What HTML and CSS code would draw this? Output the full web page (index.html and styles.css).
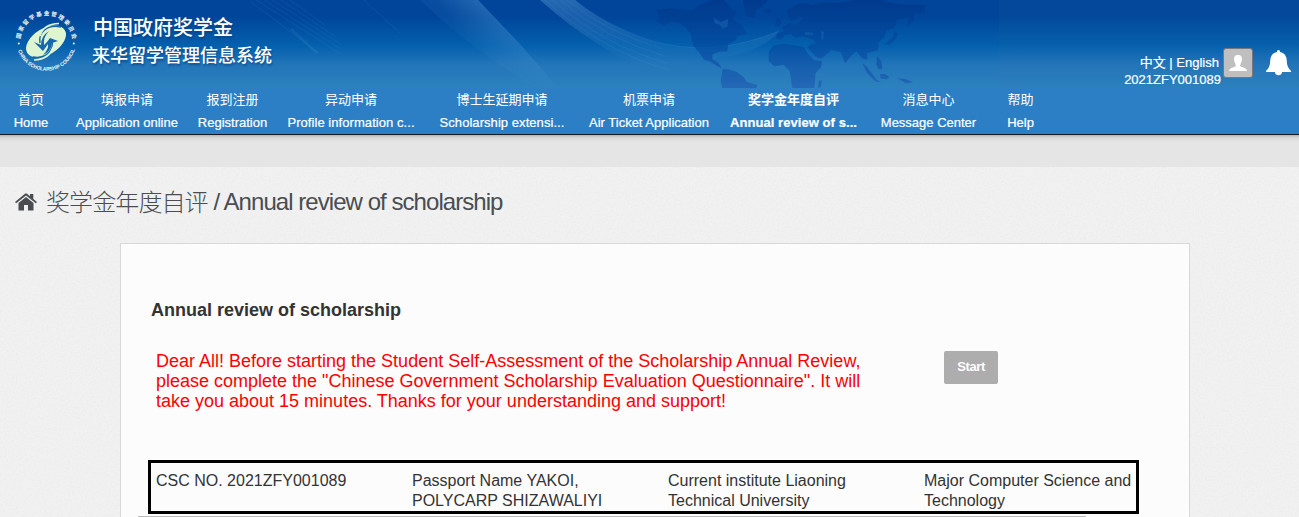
FILE: index.html
```html
<!DOCTYPE html>
<html lang="zh">
<head>
<meta charset="utf-8">
<title>Annual review of scholarship</title>
<link rel="stylesheet" href="styles.css">
</head>
<body>
<header class="header">
  <svg class="header-art" viewBox="0 0 1299 88" aria-hidden="true">
    <defs>
      <linearGradient id="beam" x1="430" y1="80" x2="500" y2="20" gradientUnits="userSpaceOnUse"><stop offset="0" stop-color="#559fd8" stop-opacity="0"/><stop offset=".6" stop-color="#559fd8" stop-opacity=".1"/><stop offset="1" stop-color="#5aa2dc" stop-opacity=".4"/></linearGradient>
      <linearGradient id="fade" x1="0" x2="0" y1="0" y2="88" gradientUnits="userSpaceOnUse"><stop offset="0" stop-color="#fff"/><stop offset=".5" stop-color="#bbb"/><stop offset="1" stop-color="#222"/></linearGradient>
      <mask id="beam-mask"><rect width="1299" height="88" fill="url(#fade)"/></mask>
      <linearGradient id="sweep" x1="0" x2="0" y1="0" y2="1"><stop offset="0" stop-color="#65a8dd" stop-opacity=".36"/><stop offset="1" stop-color="#559fd8" stop-opacity="0"/></linearGradient>
      <linearGradient id="land" x1="0" x2="0" y1="0" y2="264" gradientUnits="userSpaceOnUse"><stop offset="0" stop-color="#003789" stop-opacity=".75"/><stop offset=".55" stop-color="#044ba1" stop-opacity=".7"/><stop offset="1" stop-color="#2362b5" stop-opacity=".8"/></linearGradient>
    </defs>
    <rect x="999" width="300" height="88" fill="#2d6eb0" opacity=".08"/>
    <path fill="url(#beam)" mask="url(#beam-mask)" d="M420 0H478L520 44L558 88H535Q467 46 420 0Z"/>
    <path fill="url(#sweep)" d="M540 0H575Q602 23 646 39Q710 59 779 31Q760 55 700 61Q650 80 600 45Q570 27 540 0Z"/>
    <g fill="none" stroke="#72b2e2" stroke-opacity=".1">
      <path d="M575 0Q602 23 646 39Q710 60 779 31M567 0Q605 32 663 49M560 0Q605 39 665 56M552 0Q605 46 667 63M544 0Q605 52 669 70"/>
      <path d="M256 0L341 54M264 0L341 49M272 0L341 44M281 0L336 37M250 1L320 54M290 0L325 25"/>
      <path stroke-width="3" d="M291 29L317 53"/>
      <path d="M364 0L400 33"/>
    </g>
    <g class="world" transform="translate(620) scale(.33333)">
      <path d="M110 29L150 25L215 32L240 15L275 0H312L330 22L350 40L335 57L365 75L380 102L353 107L348 120L325 132L322 154L297 155L277 164L277 178L296 189L306 205L292 199L270 184L252 179L236 155L219 137L212 101L196 82L175 67L151 65L132 77L110 62L119 54Z"/>
      <path d="M369 0H443L429 18L407 32L404 54L379 47L373 23Z"/>
      <path d="M308 206L329 209L350 216L368 228L381 246L412 255L409 264H307L302 242Z"/>
      <path d="M458 137L490 131L515 134L551 141L565 163L582 179L606 184L603 202L587 219L583 264H517L509 212L491 195L463 199L446 184V157Z"/>
      <path d="M505 49L499 34L523 17L547 8L579 15L610 7L654 9L705 0H784L835 13L914 14L915 37L883 42L881 63L863 77L866 53L831 60L824 83L799 93L792 113L777 126L773 151L741 160L742 180L726 175L709 154L694 167L675 190L662 156L634 150L618 165L602 177L585 169L562 141L588 126L565 113L543 109L529 113L512 103L493 105L484 120L469 115L471 101L493 91L482 83L510 69L526 74L550 55L541 49L514 65Z"/>
      <path d="M824 94L833 101L828 117L808 134L793 133L817 114ZM726 188L741 201L770 239L783 247L766 244L741 219ZM780 223L793 221L808 230L801 238L782 236ZM771 169L784 184L787 207L776 208L769 195ZM831 234L858 238L880 247L858 250ZM597 242L606 241L602 262L593 263ZM431 28L454 27L448 39L435 37ZM472 53L483 60L480 78L463 78Z"/>
      <path class="water" d="M282 54L301 66L325 57L323 80L307 87L300 75L284 70ZM555 96L580 98L580 106L555 105ZM602 92L612 96L610 120L604 117ZM560 144L578 170L583 174L570 160Z"/>
    </g>
  </svg>
  <div class="brand">
    <svg class="logo" viewBox="0 0 64 66" role="img" aria-label="CSC">
      <defs><path id="arc-top" d="M6.4 30A26 26 0 0 1 58.2 30"/><path id="arc-bottom" d="M3.6 40A29.8 29.8 0 0 0 61 40"/></defs>
      <text class="seal-cn"><textPath href="#arc-top" startOffset="0" textLength="77">国家留学基金管理委员会</textPath></text>
      <text class="seal-en"><textPath href="#arc-bottom" startOffset="1.5" textLength="75" lengthAdjust="spacingAndGlyphs">CHINA SCHOLARSHIP COUNCIL</textPath></text>
      <circle cx="4.8" cy="34.5" r="1" fill="#eef6e6"/><circle cx="59.8" cy="34.5" r="1" fill="#eef6e6"/>
      <ellipse cx="32" cy="32.5" rx="22" ry="13" transform="rotate(-31 32 32.5)" fill="#dff5cf"/>
      <g fill="none" stroke="#1668ac" stroke-width="1.4">
        <path d="M26 34C24 23 34 15 47 18M38 31C40 42 32 50 19 48"/>
      </g>
      <path d="M20 33L27 36Q27 27 35 22Q29 28 30 36L33 33L36 29L44 32L38 34Q37 43 29 46Q35 40 34 35L29 42Z" fill="#1668ac"/>
      <path d="M26 27Q29 15 45 14.5M39 38Q36 50 20 51" stroke="#dff5cf" stroke-width="1.7" fill="none"/>
    </svg>
    <div class="brand-name"><div class="brand-top">中国政府奖学金</div><div class="brand-sub">来华留学管理信息系统</div></div>
  </div>
  <div class="account">
    <div class="account-text"><div class="languages">中文 | English</div><div class="user-id">2021ZFY001089</div></div>
    <div class="avatar"><svg width="18" height="17" viewBox="0 0 18 17"><path fill="#fff" d="M9 0C5.8 0 4.7 2 5.2 5.2C4.8 6 5.5 7 6 7.5C6.4 9.5 7 10 6.8 11C6 12.3 0 12.8 0 16H18C18 12.8 12 12.3 11.2 11C11 10 11.6 9.5 12 7.5C12.5 7 13.2 6 12.8 5.2C13.3 2 12.2 0 9 0Z"/></svg></div>
    <svg class="bell" width="25" height="27" viewBox="0 0 25 27"><path fill="#fff" d="M12.5 0Q14.1 0 14.1 2Q20.5 3.2 20.8 11Q20.8 17 25 21V22H16.2A3.8 4.3 0 0 1 8.8 22H0V21Q4.2 17 4.2 11Q4.5 3.2 10.9 2Q10.9 0 12.5 0Z"/></svg>
  </div>
</header>
<nav class="nav">
  <a class="nav-item"><span>首页</span><span class="en">Home</span></a>
  <a class="nav-item"><span>填报申请</span><span class="en">Application online</span></a>
  <a class="nav-item"><span>报到注册</span><span class="en">Registration</span></a>
  <a class="nav-item"><span>异动申请</span><span class="en dots">Profile information c...</span></a>
  <a class="nav-item"><span>博士生延期申请</span><span class="en dots">Scholarship extensi...</span></a>
  <a class="nav-item"><span>机票申请</span><span class="en">Air Ticket Application</span></a>
  <a class="nav-item active"><span>奖学金年度自评</span><span class="en dots">Annual review of s...</span></a>
  <a class="nav-item"><span>消息中心</span><span class="en">Message Center</span></a>
  <a class="nav-item"><span>帮助</span><span class="en">Help</span></a>
</nav>
<div class="substrip"></div>
<main class="content">
  <svg class="grain" aria-hidden="true"><filter id="noise"><feTurbulence type="fractalNoise" baseFrequency=".55" numOctaves="2"/><feColorMatrix values="0 0 0 0 .5  0 0 0 0 .5  0 0 0 0 .5  .2 0 0 0 -.08"/></filter><rect width="100%" height="100%" filter="url(#noise)"/></svg>
  <div class="page-title">
    <svg class="home" width="22" height="18" viewBox="0 0 22 18"><path fill="#494d51" d="M0 9L10 .7Q11 0 12 .7L15 3.2V1H18.3V6L22 9L20.8 10.3L11 2.6L1.2 10.3ZM3.5 10L11 4L18.5 10V17.5H13V12H9V17.5H3.5Z"/></svg>
    <h1><span class="title-cn">奖学金年度自评</span><span class="title-en"> / Annual review of scholarship</span></h1>
  </div>
  <section class="panel">
    <h2>Annual review of scholarship</h2>
    <div class="notice-row">
      <p class="notice">Dear All! Before starting the Student Self-Assessment of the Scholarship Annual Review,<br>please complete the "Chinese Government Scholarship Evaluation Questionnaire". It will<br>take you about 15 minutes. Thanks for your understanding and support!</p>
      <button class="start">Start</button>
    </div>
    <div class="details">
      <div>CSC NO. 2021ZFY001089</div>
      <div>Passport Name YAKOI,<br>POLYCARP SHIZAWALIYI</div>
      <div>Current institute Liaoning<br>Technical University</div>
      <div>Major Computer Science and<br>Technology</div>
    </div>
    <div class="rule"></div>
  </section>
</main>
</body>
</html>
```
FILE: styles.css
```css
* { box-sizing: border-box; }
body { margin: 0; height: 517px; overflow: hidden; background: #f1f1f1; color: #333; font-family: "Liberation Sans", "Noto Sans CJK SC", sans-serif; }
.header { position: relative; height: 88px; display: flex; justify-content: space-between; background: linear-gradient(#00459a 0, #00459a 18%, #0460ad 52%, #2275b9 73%, #2c82bd 100%); color: #fff; }
.header-art { position: absolute; inset: 0; width: 100%; height: 88px; }
.world { fill: url(#land); filter: blur(.4px); }
.world .water { fill: #145da9; opacity: .7; }
.brand { position: relative; display: flex; padding: 9px 0 0 14px; }
.logo { width: 64px; height: 66px; flex: none; }
.logo text { fill: #eef6f5; }
.seal-cn { font: 700 5.6px "Noto Sans CJK SC", sans-serif; }
.seal-en { font: 700 5.2px "Liberation Sans", sans-serif; }
.brand-name { padding: 4px 0 0 14px; font-family: "Noto Sans CJK SC", sans-serif; font-weight: 500; white-space: nowrap; text-shadow: 1px 2px 2px #003b7899; }
.brand-top { font-size: 20px; line-height: 28px; padding-left: 1px; }
.brand-sub { font-size: 18px; line-height: 26px; }
.account { position: relative; display: flex; padding: 48px 8px 0 0; font-size: 13px; }
.account-text { text-align: right; padding-top: 6px; width: 110px; -webkit-text-stroke: .2px #fff; }
.languages { line-height: 17px; padding-right: 1px; }
.user-id { line-height: 17px; margin-right: -1px; }
.avatar { width: 30px; height: 30px; margin-left: 3px; border: 1px solid #77777c; border-radius: 3px; background: #bfbfbf; display: flex; align-items: center; justify-content: center; }
.bell { margin: 2px 0 0 13px; }
.nav { height: 47px; display: grid; grid-template-columns: 62px 130px 81px 156px 146px 148px 141px 129px 55px; background: #2c7fc5; border-bottom: 1px solid #15191d; color: #fff; font-size: 13px; }
.nav-item { display: flex; flex-direction: column; align-items: center; padding-top: 1px; line-height: 22px; white-space: nowrap; }
.nav-item .en { padding-top: 1px; -webkit-text-stroke: .2px #fff; }
.nav-item .dots { letter-spacing: .06px; }
.active { font-weight: 700; }
.substrip { height: 32px; background: linear-gradient(#b6b6b6 0, #d9d9d9 3px, #e5e5e5 7px); }
.content { position: relative; height: 350px; overflow: hidden; }
.grain { position: absolute; inset: 0; width: 100%; height: 100%; }
.page-title { position: relative; height: 76px; display: flex; align-items: flex-start; padding: 17px 0 0 15px; color: #494d51; }
.home { margin-top: 9px; }
h1 { margin: 0 0 0 9px; display: flex; font-weight: 400; font-size: 24px; line-height: 36px; white-space: pre; }
.title-cn { font: 300 24px/34px "Noto Sans CJK SC", sans-serif; letter-spacing: -.9px; }
.title-en { letter-spacing: -.95px; }
.panel { position: relative; width: 1070px; height: 300px; margin-left: 120px; padding: 56px 0 0 28px; background: #fcfcfc; border: 1px solid #d8d8d8; }
h2 { margin: 0 0 0 2px; font-size: 18px; line-height: 20px; color: #333; }
.notice-row { display: flex; justify-content: space-between; padding: 31px 191px 0 7px; height: 140px; }
.notice { margin: 0; color: #f00; font-size: 18px; line-height: 20px; white-space: nowrap; }
.start { width: 54px; height: 33px; padding: 0 0 2px; border: 0; border-radius: 2px; background: #adadad; color: #fff; font: 700 13px "Liberation Sans", sans-serif; letter-spacing: -.4px; }
.details { width: 991px; height: 54px; margin-left: -1px; padding: 8px 0 0 5px; border: 3px solid #000; display: grid; grid-template-columns: repeat(3, 256px) 215px; font-size: 16px; line-height: 20px; white-space: nowrap; }
.rule { width: 948px; margin: 2px 0 0 -11px; border-top: 1px solid #bbb; }
```
